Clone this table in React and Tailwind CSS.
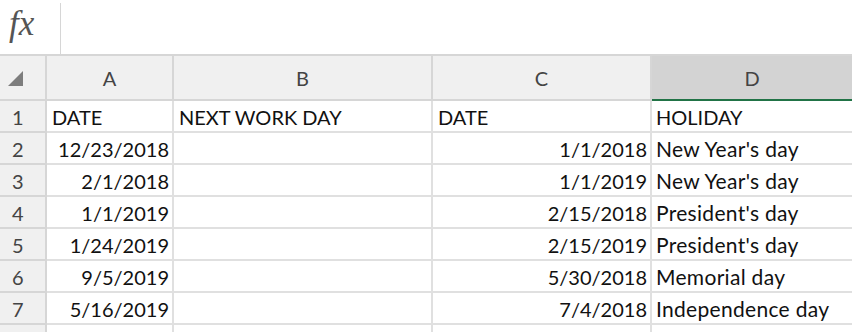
import React from "react";

const rows = [
  ["DATE", "NEXT WORK DAY", "DATE", "HOLIDAY", true],
  ["12/23/2018", "", "1/1/2018", "New Year's day"],
  ["2/1/2018", "", "1/1/2019", "New Year's day"],
  ["1/1/2019", "", "2/15/2018", "President's day"],
  ["1/24/2019", "", "2/15/2019", "President's day"],
  ["9/5/2019", "", "5/30/2018", "Memorial day"],
  ["5/16/2019", "", "7/4/2018", "Independence day"],
  ["", "", "", ""],
];

export default function App() {
  return (
    <div
      className="w-[852px] h-[332px] overflow-hidden bg-white text-[20px] text-[#111]"
      style={{ fontFamily: "Lato, 'Open Sans', sans-serif" }}
    >
      {/* formula bar */}
      <div className="flex h-[56px] border-b-2 border-[#d6d6d6]">
        <div className="w-[60px] flex items-start pl-[9px] pt-[4px]">
          <span
            className="italic text-[35px] leading-[40px] text-[#555]"
            style={{ fontFamily: "'Liberation Serif', serif" }}
          >
            fx
          </span>
        </div>
        <div className="mt-[3px] w-[1px] bg-[#d6d6d6]" />
        <div className="flex-1" />
      </div>

      {/* column header */}
      <div className="flex h-[45px] text-[#444]">
        <div className="w-[47px] shrink-0 bg-[#f0f0f0] border-r-2 border-b-2 border-[#d6d6d6] relative">
          <svg className="absolute left-[8px] top-[15px]" width="16" height="15" viewBox="0 0 16 15">
            <polygon points="15,0 15,15 0,15" fill="#7d7d7d" />
          </svg>
        </div>
        <div className="w-[127px] shrink-0 bg-[#f0f0f0] border-r-2 border-b-2 border-[#d6d6d6] flex items-center justify-center">A</div>
        <div className="w-[259px] shrink-0 bg-[#f0f0f0] border-r-2 border-b-2 border-[#d6d6d6] flex items-center justify-center">B</div>
        <div className="w-[219px] shrink-0 bg-[#f0f0f0] border-r-2 border-b-2 border-[#d6d6d6] flex items-center justify-center">C</div>
        <div className="flex-1 bg-[#d3d3d3] border-b-2 border-[#217346] flex items-center justify-center">D</div>
      </div>

      {rows.map((r, i) => (
        <div key={i} className="flex h-[32px]">
          <div className="w-[47px] shrink-0 bg-[#f0f0f0] border-r-2 border-b-2 border-[#d6d6d6] flex items-center pl-[12px] pt-[2px] text-[#444]">
            {i < 7 ? i + 1 : ""}
          </div>
          <div className={`w-[127px] shrink-0 border-r-2 border-b-2 border-[#e0e0e0] flex items-center pt-[2px] ${r[4] ? "justify-start pl-[5px]" : "justify-end pr-[3px]"}`}>
            {r[0]}
          </div>
          <div className="w-[259px] shrink-0 border-r-2 border-b-2 border-[#e0e0e0] flex items-center pl-[5px] pt-[2px] whitespace-nowrap">
            {r[1]}
          </div>
          <div className={`w-[219px] shrink-0 border-r-2 border-b-2 border-[#e0e0e0] flex items-center pt-[2px] ${r[4] ? "justify-start pl-[5px]" : "justify-end pr-[3px]"}`}>
            {r[2]}
          </div>
          <div className={`flex-1 border-b-2 border-[#e0e0e0] flex items-center pl-[4px] pt-[2px] whitespace-nowrap ${r[4] ? "" : "text-[21px] tracking-[0.3px]"}`}>
            {r[3]}
          </div>
        </div>
      ))}
    </div>
  );
}
